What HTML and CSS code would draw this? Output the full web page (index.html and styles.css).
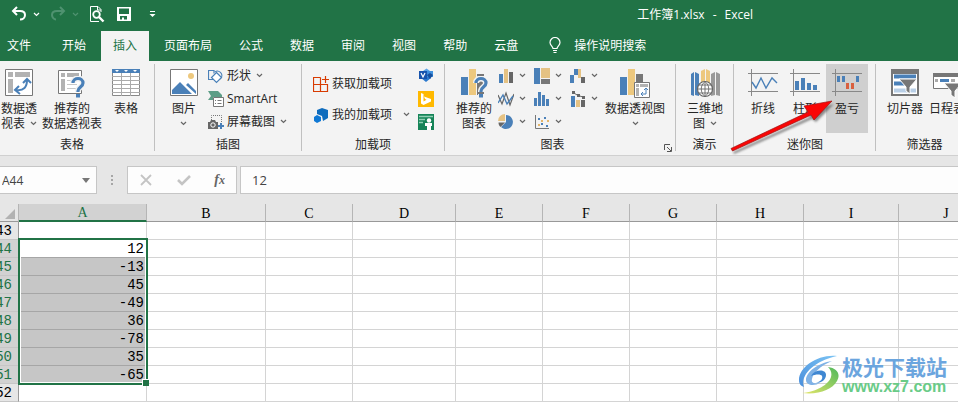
FILE: index.html
```html
<!DOCTYPE html>
<html lang="zh-CN">
<head>
<meta charset="utf-8">
<title>工作簿1.xlsx - Excel</title>
<link rel="stylesheet" href="styles.css">
</head>
<body>
<svg class="defs" aria-hidden="true">
  <symbol id="chev" viewBox="0 0 7 5"><path d="M1 1l2.5 2.500L6 1" fill="none" stroke="currentColor" stroke-width="1.2"/></symbol>
  <symbol id="bars" viewBox="0 0 28 30"><path d="M1 9h7v18H1z" fill="#4a80b8"/><path d="M9 1h7v26H9z" fill="#edc87e"/><path d="M17 6h7v21h-7z" fill="#777"/></symbol>
  <symbol id="question" viewBox="0 0 16 22"><g fill="none" stroke="#f3f3f3" stroke-width="6"><path d="M3 7C3 1 13 1 13 7c0 4-5 4-5 8v1M8 18v3"/></g><path d="M3 7C3 1 13 1 13 7c0 4-5 4-5 8v1" fill="none" stroke="#4a80b8" stroke-width="3.2"/><path d="M6 18h4v3.500H6z" fill="#4a80b8"/></symbol>
</svg>

<header class="top">
  <div class="titlebar">
    <div class="quick">
      <button aria-label="撤消" class="undo"><svg width="16" height="16" viewBox="0 0 16 16"><path d="M6 1L2 5l4 4M2 5h7c3 0 5 1.500 5 4s-2 4.500-5 4.500" fill="none" stroke="#fff" stroke-width="2"/></svg></button>
      <button aria-label="撤消选项" class="qchev"><svg width="7" height="5"><use href="#chev"/></svg></button>
      <button aria-label="恢复" class="redo dim"><svg width="16" height="16" viewBox="0 0 16 16"><path d="M10 1l4 4-4 4M14 5H7C4 5 2 6.500 2 9s2 4.500 4 4.500" fill="none" stroke="currentColor" stroke-width="2"/></svg></button>
      <button aria-label="恢复选项" class="qchev dim"><svg width="7" height="5"><use href="#chev"/></svg></button>
      <button aria-label="打印预览" class="preview"><svg width="16" height="17" viewBox="0 0 16 17"><path d="M4 15.500H1.500v-15H9l3 3V6M8.500.5V4H12M4 15.500h6" fill="none" stroke="#fff"/><circle cx="7.500" cy="8.500" r="3.300" fill="none" stroke="#fff" stroke-width="1.800"/><path d="M10 11l4.500 4.500" stroke="#fff" stroke-width="2.400"/></svg></button>
      <button aria-label="保存" class="save"><svg width="14" height="14" viewBox="0 0 14 14"><path d="M0 0h14v14H0zM2 1.500V7h10V1.500zM3 9v3.500h2V10.500h2v2h3V9z" fill="#fff" fill-rule="evenodd"/></svg></button>
      <button aria-label="自定义快速访问工具栏"><svg width="7" height="7" viewBox="0 0 7 7"><path d="M1 .5h5" stroke="#fff"/><path d="M.5 3h6l-3 3z" fill="#fff"/></svg></button>
    </div>
    <div class="doc-title"><span>工作簿1.xlsx</span><span>-</span><span>Excel</span></div>
  </div>
  <nav class="tabs">
    <button class="tab file">文件</button>
    <button class="tab">开始</button>
    <button class="tab active">插入</button>
    <button class="tab">页面布局</button>
    <button class="tab">公式</button>
    <button class="tab">数据</button>
    <button class="tab">审阅</button>
    <button class="tab">视图</button>
    <button class="tab">帮助</button>
    <button class="tab">云盘</button>
    <button class="tab tell"><svg width="12" height="17" viewBox="0 0 12 17"><path d="M4 11.500c0-2-3-3-3-6a5 5 0 0 1 10 0c0 3-3 4-3 6zM4 13.500h4M4.500 15.500h3" fill="none" stroke="#fff" stroke-width="1.200"/></svg>操作说明搜索</button>
  </nav>
</header>

<main>
<div class="ribbon">
  <section class="group tables">
    <div class="items">
      <button class="big"><svg width="28" height="30" viewBox="0 0 28 30"><path d="M.5 1.500h27v26H.5z" fill="#fff" stroke="#777"/><path d="M3 4h5v5H3zM10 4h15v5H10zM3 11h5v14H3z" fill="#b2b2b2"/><path d="M11 22c8 1 11-3 11-10M18 15l4-4 4 4M14 18l-4 4 5 4" fill="none" stroke="#4a80b8" stroke-width="2"/></svg><span>数据透<br>视表<svg class="chev inline" width="7" height="5"><use href="#chev"/></svg></span></button>
      <button class="big wide"><svg width="28" height="30" viewBox="0 0 28 30"><path d="M.5 2.500h23v23H.5z" fill="#fff" stroke="#777"/><path d="M3 5h4v4H3zM9 5h12v4H9zM3 11h4v12H3z" fill="#b2b2b2"/><path d="M9 12.500h10M9 16.500h10M9 20.500h10" stroke="#c8c8c8"/><use href="#question" x="12" y="8" width="16" height="22"/></svg><span>推荐的<br>数据透视表</span></button>
      <button class="big"><svg width="28" height="30" viewBox="0 0 28 30"><path d="M.5 1.500h27v26H.5z" fill="#fff" stroke="#888"/><path d="M0 1h28v4H0z" fill="#4a80b8"/><path d="M3 2h4L5 4zM12 2h4l-2 2zM21 2h4l-2 2z" fill="#fff"/><path d="M9.500 5v23M18.500 5v23M0 8.500h28M0 12.500h28M0 16.500h28M0 20.500h28M0 24.500h28" stroke="#aaa"/></svg><span>表格</span></button>
    </div>
    <h2>表格</h2>
  </section>

  <section class="group art">
    <div class="items">
      <button class="big"><svg width="28" height="30" viewBox="0 0 28 30"><path d="M.5 1.500h27v26H.5z" fill="#fff" stroke="#777"/><circle cx="21" cy="8" r="3" fill="#edc87e"/><path d="M2 26v-4l8-8 9 9 3 3zM16 17l2-2 8 8v3z" fill="#4a80b8"/></svg><span>图片<br><svg class="chev" width="7" height="5"><use href="#chev"/></svg></span></button>
      <div class="stack">
        <button class="small"><svg width="16" height="16" viewBox="0 0 16 16"><path d="M6 5.500V2.500H.5v9H5M7 4a4.300 4.300 0 1 1 5 7" fill="none" stroke="#4a80b8" stroke-width="1.200"/><path d="M8.500 4.500l5 5-5 5-5-5z" fill="#fff" stroke="#4a80b8" stroke-width="1.200"/></svg>形状<svg class="chev" width="7" height="5"><use href="#chev"/></svg></button>
        <button class="small"><svg width="16" height="16" viewBox="0 0 16 16"><path d="M0 0h10l4 4v2H5v3H0l3-4z" fill="#5d9e87"/><path d="M5.500 6.500h10v9h-10z" fill="#fff" stroke="#777"/><path d="M7 9.500h1m1.500 0h4M7 12.500h1m1.500 0h4" stroke="#777"/></svg>SmartArt</button>
        <button class="small"><svg width="16" height="16" viewBox="0 0 16 16"><path d="M3.500 6V1.500h10v7" fill="none" stroke="#777" stroke-dasharray="1 1"/><path d="M0 8h2l1-2h4l1 2h2v7H0z" fill="#666"/><circle cx="5" cy="11" r="2.200" fill="#666" stroke="#fff"/><path d="M10 12h6M13 9v6" stroke="#4a80b8" stroke-width="2"/></svg>屏幕截图<svg class="chev" width="7" height="5"><use href="#chev"/></svg></button>
      </div>
    </div>
    <h2>插图</h2>
  </section>

  <section class="group addins">
    <div class="items">
      <div class="stack loose">
        <button class="small"><svg width="16" height="16" viewBox="0 0 16 16"><path d="M7.500 1.500h-7v14h14v-7H.5M7.500 1.500v14M12.500 0v7M9 3.500h7" fill="none" stroke="#d83b01" stroke-width="1.200"/></svg>获取加载项</button>
        <button class="small"><svg width="16" height="16" viewBox="0 0 16 16"><path d="M9 1l6 2v8l-5 3-1-5-5-2V3z" fill="#0f6cbd"/><path d="M4 8l4 2v4l-4 2-3-2v-4z" fill="#0f78d4"/></svg>我的加载项<svg class="chev far" width="7" height="5"><use href="#chev"/></svg></button>
      </div>
      <div class="stack">
        <button class="small" aria-label="Visio"><svg width="16" height="16" viewBox="0 0 16 16"><path d="M5 3l3.500-2.500L12 3 8.500 6z" fill="#5ba4e8"/><path d="M3 10l5-3 5 3-5 4z" fill="#2b79ce"/><path d="M9 3h6v6H9z" fill="#3f8fdd"/><path d="M9 7l3-2 3 2-3 4z" fill="#174f9d"/><path d="M1 3h8v8H1z" fill="#1854ad"/><path d="M3 5l2 4 2-4" fill="none" stroke="#fff" stroke-width="1.200"/></svg></button>
        <button class="small" aria-label="必应地图"><svg width="16" height="16" viewBox="0 0 16 16"><path d="M0 0h16v16H0z" fill="#ffb900"/><path d="M3 2l2.500 1v7.500l3-1.700-1.500-.8-1-2.500 7 2.500v2.500L5.500 14 3 12.500z" fill="#fff"/></svg></button>
        <button class="small" aria-label="人员图"><svg width="16" height="16" viewBox="0 0 16 16"><path d="M0 0h16v16H0z" fill="#168458"/><path d="M1 2.500h14M1 5.500h6M1 8.500h4" stroke="#8fd0b4" stroke-width="1.400"/><circle cx="11" cy="6.500" r="2.200" fill="#fff"/><path d="M7 9h7v3h-1v4H9v-4H7z" fill="#fff"/></svg></button>
      </div>
    </div>
    <h2>加载项</h2>
  </section>

  <section class="group charts">
    <div class="items">
      <button class="big"><svg width="28" height="30" viewBox="0 0 28 30"><use href="#bars" x="0" y="0" width="28" height="30"/><use href="#question" x="13" y="8" width="16" height="22"/></svg><span>推荐的<br>图表</span></button>
      <div class="chart-grid">
        <button class="small" aria-label="柱形图"><svg width="16" height="16" viewBox="0 0 16 16"><path d="M1 6h4v9H1z" fill="#4a80b8"/><path d="M6 1h4v14H6z" fill="#e5c283"/><path d="M11 4h4v11h-4z" fill="#666"/></svg><svg class="chev" width="7" height="5"><use href="#chev"/></svg></button>
        <button class="small" aria-label="层次结构图"><svg width="16" height="16" viewBox="0 0 16 16"><path d="M0 0h6v16H0z" fill="#4a80b8"/><path d="M7 0h9v10H7z" fill="#e5c283"/><path d="M7 11h9v5H7z" fill="#777"/></svg><svg class="chev" width="7" height="5"><use href="#chev"/></svg></button>
        <button class="small" aria-label="瀑布图"><svg width="16" height="16" viewBox="0 0 16 16"><path d="M0 7h4v8H0zM4 1h4v6H4z" fill="#4a80b8"/><path d="M8 1h3v9H8z" fill="#e5c283"/><path d="M11 9h4v6h-4z" fill="#666"/></svg><svg class="chev" width="7" height="5"><use href="#chev"/></svg></button>
        <button class="small" aria-label="折线图"><svg width="16" height="16" viewBox="0 0 16 16"><path d="M0 4l4 9 4-11 4 12 4-11" fill="none" stroke="#666" stroke-width="1.200"/><path d="M0 12l5-8 4 9 6-8" fill="none" stroke="#4a80b8" stroke-width="1.400"/></svg><svg class="chev" width="7" height="5"><use href="#chev"/></svg></button>
        <button class="small" aria-label="统计图"><svg width="16" height="16" viewBox="0 0 16 16"><path d="M0 7h3v8H0zM4 1h3v14H4zM8 4h3v11H8zM12 8h3v7h-3z" fill="#4a80b8"/></svg><svg class="chev" width="7" height="5"><use href="#chev"/></svg></button>
        <button class="small" aria-label="组合图"><svg width="16" height="16" viewBox="0 0 16 16"><path d="M1 5h4v11H1z" fill="#4a80b8"/><path d="M6 9h4v7H6z" fill="#e5c283"/><path d="M11 9h4v7h-4z" fill="#666"/><path d="M3 1.500l5 3 5 1.500" fill="none" stroke="#666"/><path d="M2 0h3v3H2zM7 3h3v3H7zM12 5h3v3h-3z" fill="#666"/></svg><svg class="chev" width="7" height="5"><use href="#chev"/></svg></button>
        <button class="small" aria-label="饼图"><svg width="16" height="16" viewBox="0 0 16 16"><path d="M8 8V1a7 7 0 1 1-5 12z" fill="#4a80b8"/><path d="M7 7V0a7 7 0 0 0-7 7z" fill="#e5c283"/><path d="M7 8.500H.5c0 2 .5 3 2 4.500z" fill="#666"/></svg><svg class="chev" width="7" height="5"><use href="#chev"/></svg></button>
        <button class="small" aria-label="散点图"><svg width="16" height="16" viewBox="0 0 16 16"><path d="M1.500 1v13.500H15" fill="none" stroke="#777"/><path d="M4 4h2v2H4zM10 3h2v2h-2zM7 9h2v2H7zM12 11h2v2h-2z" fill="#4a80b8"/><path d="M7 6h2v2H7zM4 10h2v2H4zM13 6h2v2h-2z" fill="#e5b66a"/></svg><svg class="chev" width="7" height="5"><use href="#chev"/></svg></button>
      </div>
      <button class="big wide"><svg width="32" height="30" viewBox="0 0 32 30"><use href="#bars" x="0" y="0" width="28" height="30"/><path d="M15.500 14.500h15v15h-15z" fill="#fff" stroke="#777"/><path d="M17 16h3v3h-3zM21 16h8v3h-8zM17 20h3v8h-3z" fill="#b2b2b2"/><path d="M22 26h5v-5M25 22l2-2 2 2M24 24l-2 2 2 2" fill="none" stroke="#4a80b8"/></svg><span>数据透视图<br><svg class="chev" width="7" height="5"><use href="#chev"/></svg></span></button>
    </div>
    <div class="foot"><h2>图表</h2><button class="launch" aria-label="图表选项"><svg width="8" height="8" viewBox="0 0 8 8"><path d="M.5 6V.5H6M3 3l4 4M7.500 3v4.500H3" fill="none" stroke="#555"/></svg></button></div>
  </section>

  <section class="group demo">
    <div class="items">
      <button class="big"><svg width="30" height="30" viewBox="0 0 30 30"><path d="M1 6l3-2v24l-3-1zM5 4l4 2v22l-4-1z" fill="#4a80b8"/><path d="M11 3l4-2v14h-4zM16 1l4 2v12h-4z" fill="#edc87e"/><path d="M21 6l4-2v23l-4 1zM26 4l4 2v22l-4-1z" fill="#999"/><circle cx="15" cy="21" r="7.500" fill="#fff" stroke="#666" stroke-width="1.200"/><path d="M7.500 21h15M9 17h12M9 25h12M15 13.500v15M15 13.500c-5 4-5 11 0 15M15 13.500c5 4 5 11 0 15" fill="none" stroke="#666" stroke-width=".9"/></svg><span>三维地<br>图<svg class="chev inline" width="7" height="5"><use href="#chev"/></svg></span></button>
    </div>
    <h2>演示</h2>
  </section>

  <section class="group spark">
    <div class="items">
      <button class="big"><svg width="30" height="30" viewBox="0 0 30 30"><path d="M0 5.500h30M0 23.500h30M3.500 1v27" stroke="#888"/><path d="M4 14l4 6 5-10 5 10 6-10 5 5" fill="none" stroke="#4a80b8" stroke-width="1.400"/></svg><span>折线</span></button>
      <button class="big"><svg width="30" height="30" viewBox="0 0 30 30"><path d="M0 5.500h30M0 23.500h30M3.500 1v27" stroke="#888"/><path d="M5 13h4v9H5zM11 10h4v12h-4zM17 15h4v7h-4zM23 17h4v5h-4z" fill="#4a80b8"/></svg><span>柱形</span></button>
      <button class="big pressed"><svg width="30" height="30" viewBox="0 0 30 30"><path d="M0 5.500h30M0 23.500h30M3.500 1v27" stroke="#888"/><path d="M5 8h3v6H5zM10 8h3v6h-3zM24 8h3v6h-3z" fill="#4a80b8"/><path d="M14 15h3v6h-3zM19 15h3v6h-3z" fill="#d9603f"/></svg><span>盈亏</span></button>
    </div>
    <h2>迷你图</h2>
    <svg class="arrow" width="110" height="62" viewBox="0 0 110 62"><defs><filter id="soft"><feGaussianBlur stdDeviation="1.200"/></filter></defs><path d="M2 51L79 16l-3-6 27-7-18 18-4-3L3 53z" transform="translate(2 3)" fill="#444" opacity=".6" filter="url(#soft)"/><path d="M2 50.500L79 14l-4-6 28-5-18 19-3-5L3.500 53z" fill="#fa0505" stroke="#9c1616" stroke-width=".7"/></svg>
  </section>

  <section class="group filters">
    <div class="items">
      <button class="big"><svg width="28" height="30" viewBox="0 0 28 30"><path d="M1 2h26v25H1z" fill="#fff" stroke="#777" stroke-width="2"/><path d="M0 1h28v5H0z" fill="#777"/><path d="M3 8.500h22M3 15.500h12" stroke="#4a80b8" stroke-width="4"/><path d="M3 22.500h22" stroke="#b9cfe6" stroke-width="4"/><path d="M8 11h18l-7 8v7l-4-3v-4z" fill="#777" stroke="#fff"/></svg><span>切片器</span></button>
      <button class="big"><svg width="28" height="30" viewBox="0 0 28 30"><path d="M.5 5.500h29v15H.5z" fill="#fff" stroke="#777"/><path d="M0 5h30v4H0z" fill="#777"/><path d="M2 11h3v3H2zM18 11h4v3h-4z" fill="#aaa"/><path d="M7 11h9v3H7z" fill="#4a80b8"/><path d="M11 15h18l-7 8v7l-4-3v-4z" fill="#777" stroke="#fff"/></svg><span>日程表</span></button>
    </div>
    <h2>筛选器</h2>
  </section>
</div>

<div class="formula-bar">
  <div class="namebox"><input aria-label="名称框" value="A44"><svg width="8" height="5" viewBox="0 0 8 5"><path d="M0 0h8L4 5z" fill="#777"/></svg></div>
  <svg class="grip" width="2" height="12" viewBox="0 0 2 12"><path d="M0 1h2v2H0zM0 5h2v2H0zM0 9h2v2H0z" fill="#a6a6a6"/></svg>
  <div class="fx">
    <button aria-label="取消"><svg width="14" height="12" viewBox="0 0 14 12"><path d="M2 1l10 10M12 1L2 11" stroke="#c4c4c4" stroke-width="1.800"/></svg></button>
    <button aria-label="输入"><svg width="14" height="12" viewBox="0 0 14 12"><path d="M1 6l4 4 8-8" fill="none" stroke="#c4c4c4" stroke-width="2.600"/></svg></button>
    <button class="fn" aria-label="插入函数"><i>f<small>x</small></i></button>
  </div>
  <input class="formula" aria-label="编辑栏" value="12">
</div>

<div class="sheet">
<table>
  <colgroup><col class="c-head"><col class="c-a"><col class="c-b"><col class="c-std"><col class="c-d"><col class="c-std"><col class="c-std"><col class="c-std"><col class="c-std"><col class="c-wide"><col class="c-wide"></colgroup>
  <thead><tr><th class="corner"><svg width="10" height="10" viewBox="0 0 10 10"><path d="M10 0v10H0z" fill="#b2b2b2"/></svg></th><th class="on">A</th><th>B</th><th>C</th><th>D</th><th>E</th><th>F</th><th>G</th><th>H</th><th>I</th><th>J</th></tr></thead>
  <tbody>
  <tr><th><span>43</span></th><td></td><td></td><td></td><td></td><td></td><td></td><td></td><td></td><td></td><td></td></tr>
  <tr class="sel first"><th><span>44</span></th><td>12<div class="range"></div></td><td></td><td></td><td></td><td></td><td></td><td></td><td></td><td></td><td></td></tr>
  <tr class="sel"><th><span>45</span></th><td>-13</td><td></td><td></td><td></td><td></td><td></td><td></td><td></td><td></td><td></td></tr>
  <tr class="sel"><th><span>46</span></th><td>45</td><td></td><td></td><td></td><td></td><td></td><td></td><td></td><td></td><td></td></tr>
  <tr class="sel"><th><span>47</span></th><td>-49</td><td></td><td></td><td></td><td></td><td></td><td></td><td></td><td></td><td></td></tr>
  <tr class="sel"><th><span>48</span></th><td>36</td><td></td><td></td><td></td><td></td><td></td><td></td><td></td><td></td><td></td></tr>
  <tr class="sel"><th><span>49</span></th><td>-78</td><td></td><td></td><td></td><td></td><td></td><td></td><td></td><td></td><td></td></tr>
  <tr class="sel"><th><span>50</span></th><td>35</td><td></td><td></td><td></td><td></td><td></td><td></td><td></td><td></td><td></td></tr>
  <tr class="sel"><th><span>51</span></th><td>-65</td><td></td><td></td><td></td><td></td><td></td><td></td><td></td><td></td><td></td></tr>
  <tr><th><span>52</span></th><td></td><td></td><td></td><td></td><td></td><td></td><td></td><td></td><td></td><td></td></tr>
  </tbody>
</table>
<div class="watermark">
  <svg width="42" height="40" viewBox="0 0 42 40"><defs><linearGradient id="wa" x1="0" y1="1" x2="1" y2="0"><stop offset="0" stop-color="#4a8fdc"/><stop offset="1" stop-color="#7cc4f4"/></linearGradient><linearGradient id="wb" x1="0" y1="1" x2="1" y2="0"><stop offset="0" stop-color="#e6e76a"/><stop offset="1" stop-color="#4fb85c"/></linearGradient></defs><path d="M39 1C20-1 1 12 1 25c0 4 2 6 5 7C2 22 13 7 39 1z" fill="url(#wa)"/><path d="M34 6C20 8 8 17 8 25c0 6 9 6 14 3-6 1-9 0-8-4C15 18 22 11 34 6z" fill="#7fb2e6"/><path d="M13 21c4-7 15-7 15-1 0 5-5 8-10 8 5-2 7-4 6-7-1-2-6-2-11 0z" fill="#3f87d2"/><path d="M30 12c9 1 13 7 9 14C34 35 20 40 4 38c15-1 27-9 29-16 1-4 0-7-3-10z" fill="url(#wb)"/></svg>
  <div><strong>极光下载站</strong><span>www.xz7.com</span></div>
</div>
</div>
</main>
</body>
</html>
```
FILE: styles.css
```css
* { box-sizing: border-box; }
body {
  margin: 0;
  overflow: hidden;
  background: #e6e6e6;
  color: #262626;
  font: 12px/15px "Open Sans", "Noto Sans CJK SC", sans-serif;
}
button {
  margin: 0;
  padding: 0;
  border: 0;
  background: none;
  color: inherit;
  font: inherit;
  white-space: nowrap;
}
input { border: 0; padding: 0; background: none; font: inherit; color: #444; }
svg { display: block; flex: none; }
.defs { position: absolute; width: 0; height: 0; }

/* Title bar and tabs */
.top { background: #217346; color: #fff; }
.titlebar { display: flex; align-items: center; height: 31px; padding: 0 205px 3px 11px; }
.quick { display: flex; align-items: center; }
.undo, .redo { margin-right: 6px; }
.qchev { margin-right: 10px; }
.preview { margin-right: 12px; }
.save { margin-right: 18px; }
.dim { color: #4f9270; }
.doc-title { display: flex; gap: 8px; margin-left: auto; }
.tabs { display: flex; gap: 3px; height: 30px; }
.tab { display: flex; align-items: center; padding: 0 12px 2px; }
.tab.file { padding-left: 7px; padding-right: 16px; }
.tab.active { background: #f3f3f3; color: #217346; }
.tell { gap: 13px; padding-left: 16px; }

/* Ribbon */
.ribbon { display: flex; height: 95px; padding-top: 3px; background: #f3f3f3; border-bottom: 1px solid #d0d0d0; overflow: hidden; }
.group { position: relative; flex: none; height: 87px; border-right: 1px solid #c0c0c0; }
.items { display: flex; height: 69px; }
h2 { margin: 4px 0 0; font: inherit; text-align: center; }
.big { display: flex; flex-direction: column; align-items: center; gap: 3px; flex: none; width: 42px; padding-top: 4px; }
.big.wide { width: 62px; }
.big span { text-align: center; }
.chev { color: #666; }
.big .chev { margin: 5px auto; }
.big .chev.inline { display: inline-block; margin: 0 0 2px 5px; }
.pressed { background: #cfcfcf; }
.stack { display: flex; flex-direction: column; }
.small { display: flex; align-items: center; gap: 3px; height: 23px; }
.small .chev { margin-left: 2px; }
.tables { width: 155px; }
.tables .big:first-child { width: 38px; margin-right: 3px; }
.tables .big:last-child { width: 46px; }
.tables h2 { padding-right: 10px; }
.art { width: 147px; padding-left: 8px; }
.art .stack { margin-left: 3px; }
.art h2 { padding-right: 8px; }
.addins { width: 143px; padding-left: 11px; }
.addins .loose { width: 105px; padding-top: 4px; }
.loose .small { height: 31px; }
.small .chev.far { margin-left: 8px; }
.addins h2 { padding-right: 11px; }
.charts { width: 231px; padding-left: 8px; }
.chart-grid { display: grid; grid-template-columns: repeat(3, 36px); margin-left: 3px; }
.charts .wide { width: 58px; }
.foot { display: flex; }
.foot h2 { flex: 1; padding-right: 12px; }
.launch { align-self: flex-end; margin-right: 3px; }
.demo { width: 58px; padding-left: 8px; }
.demo h2 { padding-right: 8px; }
.spark { width: 142px; padding-left: 8px; }
.spark h2 { padding-right: 7px; }
.arrow { position: absolute; left: -5px; top: 34px; z-index: 1; }
.filters { width: 98px; padding-left: 8px; }
.filters h2 { padding-right: 8px; }

/* Formula bar */
.formula-bar { display: flex; align-items: center; height: 48px; color: #444; }
.namebox, .fx, .formula { height: 28px; border: 1px solid #c6c6c6; background: #fdfdfd; }
.namebox { display: flex; align-items: center; width: 97px; padding: 0 6px 0 2px; border-left: 0; }
.namebox input { flex: 1; min-width: 0; }
.grip { margin: 0 14px; }
.fx { display: flex; align-items: center; justify-content: space-between; width: 110px; padding: 0 11px; }
.fn { font: bold 14px/20px "Liberation Serif", serif; color: #666; }
.fn small { font-size: 12px; }
.formula { flex: 1; margin-left: 3px; padding-left: 11px; border-right: 0; font-size: 13px; }

/* Worksheet */
.sheet { position: relative; overflow: hidden; }
table { width: 994px; table-layout: fixed; border-collapse: separate; border-spacing: 0; }
.c-head { width: 19px; }
.c-a { width: 128px; }
.c-b { width: 119px; }
.c-std { width: 87px; }
.c-d { width: 103px; }
.c-wide { width: 95px; }
th, td { height: 18px; padding: 2px 0 0; font: 14px/15px "Liberation Mono", monospace; color: #000; }
td { position: relative; padding-right: 2px; background: #fff; border: solid #d4d4d4; border-width: 0 1px 1px 0; text-align: right; }
thead th { border-right: 1px solid #b5b5b5; border-bottom: 1px solid #999; font-family: "Liberation Serif", serif; }
thead .on { padding-top: 1px; background: #d2d2d2; color: #217346; border-bottom: 2px solid #217346; }
.corner svg { margin: 0 0 0 5px; }
tbody th { border-right: 1px solid #999; border-bottom: 1px solid #c6c6c6; }
tbody th span { display: flex; justify-content: flex-end; padding-right: 6px; }
.sel th { background: #d2d2d2; color: #217346; }
.sel td:nth-child(2) { background: #c6c6c6; border-bottom-color: #a6a6a6; }
.sel.first td:nth-child(2) { background: #fff; }
.range { position: absolute; z-index: 1; left: -1px; top: -2px; width: 130px; height: 147px; border: 2px solid #217346; box-shadow: inset 0 0 0 1px #fff; }
.range::after { content: ""; position: absolute; right: -3px; bottom: -3px; width: 6px; height: 6px; background: #217346; border: solid #fff; border-width: 1px 0 0 1px; }
.watermark { position: absolute; z-index: 2; right: 11px; bottom: 6px; display: flex; align-items: center; gap: 2px; }
.watermark strong, .watermark span { display: block; }
.watermark strong { font: bold 21px/24px "Noto Sans CJK SC", sans-serif; color: #6ba5de; }
.watermark span { font: bold 16px/18px "Liberation Sans", sans-serif; color: #69cb87; }
```
